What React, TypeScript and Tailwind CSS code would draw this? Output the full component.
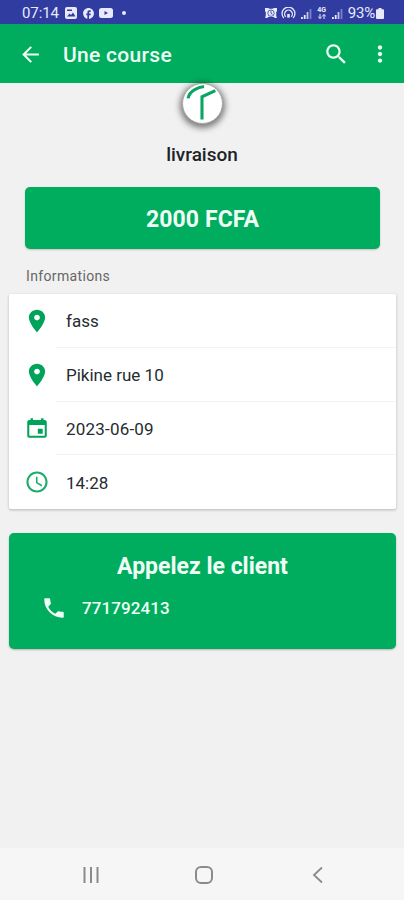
import React from "react";
import type { IconType } from "react-icons";
import {
  IoMdArrowBack,
  IoMdCalendar,
  IoMdCall,
  IoMdMore,
  IoMdPin,
  IoMdSearch,
  IoMdTime,
} from "react-icons/io";
import { MdFacebook } from "react-icons/md";

const infos: { icon: IconType; text: string }[] = [
  { icon: IoMdPin, text: "fass" },
  { icon: IoMdPin, text: "Pikine rue 10" },
  { icon: IoMdCalendar, text: "2023-06-09" },
  { icon: IoMdTime, text: "14:28" },
];

const Signal: React.FC = () => (
  <svg viewBox="0 0 11 11" className="w-[11px] h-[11px]" fill="currentColor">
    <path d="M0 9h1.8v2H0z" />
    <path d="M2.8 7h1.8v4H2.8z" />
    <path d="M5.6 4h1.8v7H5.6z" opacity=".8" />
    <path d="M8.6 1h1.8v10H8.6z" opacity=".4" />
  </svg>
);

const StatusBar: React.FC = () => (
  <div className="h-6 shrink-0 bg-[#303c9f] text-[#e8eafc] flex items-center justify-between pl-[22px] pr-[20px] pt-[2px]">
    <div className="flex items-center">
      <span className="text-[15px] leading-none w-[38px] tracking-[-0.1px]">
        07:14
      </span>
      <svg viewBox="0 0 12 12" className="w-[12px] h-[12px] ml-[5px]">
        <rect width="12" height="12" rx="2" fill="currentColor" />
        <path d="M2 9.500 4.500 6.500 6 8l2-2.500 2.500 4z" fill="#303c9f" />
        <path d="M2 2.500h5v1.500H2z" fill="#303c9f" />
      </svg>
      <MdFacebook className="w-[13px] h-[13px] ml-[5px]" />
      <svg viewBox="0 0 14 10" className="w-[14px] h-[10px] ml-[4px]">
        <rect width="14" height="10" rx="2.5" fill="currentColor" />
        <path d="M5.5 3v4L9 5z" fill="#303c9f" />
      </svg>
      <span className="w-1 h-1 rounded-full bg-current ml-[9px]" />
    </div>
    <div className="flex items-center">
      <svg viewBox="0 0 12 12" className="w-[12px] h-[12px]">
        <path
          d="M0 1h3l1.500.8h3L9 1h3v3l-.8 1.200v3l.6 2.800h-2l-1-1H3.200l-1 1h-2L.8 8.200v-3L0 4z"
          fill="currentColor"
        />
        <circle cx="6" cy="6.200" r="3.200" fill="none" stroke="#303c9f" strokeWidth=".8" />
        <path d="M6 4.200v2.200l1.400.8" fill="none" stroke="#303c9f" strokeWidth=".9" />
      </svg>
      <svg
        viewBox="0 0 16 13"
        className="w-[15px] h-[12px] ml-[4px] mr-[5px]"
        fill="none"
        stroke="currentColor"
        strokeWidth="1.400"
      >
        <path d="M3 12A7 7 0 1 1 13 12" />
        <path d="M5 10.500a4.200 4.200 0 1 1 6 0" />
        <path d="M8 7.500v4" strokeWidth="2.800" />
      </svg>
      <Signal />
      <span className="relative w-[10px] h-[12px] mx-[5px] text-[7px] leading-[7px] font-bold">
        <span className="block text-center">4G</span>
        <svg
          viewBox="0 0 10 5"
          className="absolute bottom-0 left-0 w-[10px] h-[5px]"
          fill="none"
          stroke="currentColor"
        >
          <path d="M3 0v4.500M1.200 2.800 3 4.500l1.800-1.700M7 5V.6M5.200 2.200 7 .6l1.800 1.600" />
        </svg>
      </span>
      <Signal />
      <span className="text-[15px] leading-none ml-[5px] tracking-[-0.2px]">
        93%
      </span>
      <svg viewBox="0 0 8 11" className="w-2 h-[11px] ml-px">
        <path
          d="M2.500 0h3v1.200H7a1 1 0 0 1 1 1V10a1 1 0 0 1-1 1H1a1 1 0 0 1-1-1V2.200a1 1 0 0 1 1-1h1.500z"
          fill="currentColor"
        />
      </svg>
    </div>
  </div>
);

const Header: React.FC = () => (
  <header className="h-[59px] shrink-0 bg-[#00ad5f] text-[#edfff4] flex items-center pl-[18px] pr-[10px]">
    <IoMdArrowBack className="w-[25px] h-[25px] mt-px" />
    <h1 className="ml-[20px] mt-[3px] flex-1 text-[21px] leading-none font-medium tracking-[0.3px]">
      Une course
    </h1>
    <IoMdSearch className="w-[26px] h-[26px]" />
    <IoMdMore className="w-[28px] h-[28px] ml-[17px] mt-px" />
  </header>
);

const Logo: React.FC = () => (
  <div className="w-[41px] h-[41px] rounded-full bg-white border border-[#a5a5a5] shadow-[0_2px_6px_2px_rgba(0,0,0,0.5)] overflow-hidden">
    <svg
      viewBox="0 0 38 38"
      className="w-full h-full"
      fill="none"
      stroke="#08a663"
      strokeWidth="3"
    >
      <path d="M5 14c.5-4 3-6.500 6.500-8.500C14 4 17 3 20.500 2.500" />
      <path d="M18.500 34.500V12.500L31.500 6.500" />
    </svg>
  </div>
);

const NavBar: React.FC = () => (
  <nav className="h-[52px] shrink-0 bg-[#f6f6f6] flex items-center justify-between pl-[82px] pr-[77px] pt-px text-[#8a8a8a]">
    <svg viewBox="0 0 18 18" className="w-[18px] h-[18px]" stroke="currentColor" strokeWidth="2">
      <path d="M2.500 1v16M9 1v16M15.500 1v16" />
    </svg>
    <span className="w-[18px] h-[18px] rounded-[6px] border-2 border-current mr-[2px]" />
    <svg viewBox="0 0 18 18" className="w-[18px] h-[18px]" fill="none" stroke="currentColor" strokeWidth="1.800">
      <path d="M13 1.500 5 9l8 7.500" />
    </svg>
  </nav>
);

const App: React.FC = () => {
  return (
    <div className="w-full h-screen flex flex-col bg-[#f1f1f1] font-[Roboto,sans-serif] overflow-hidden">
      <StatusBar />
      <Header />

      <main className="flex-1 flex flex-col">
        <div className="flex flex-col items-center">
          <Logo />
          <h2 className="mt-[19px] text-[19px] leading-6 font-medium text-[#1c2428]">
            livraison
          </h2>
        </div>

        <div className="mt-[20px] ml-[25px] mr-[24px] h-[62px] rounded-[5px] bg-[#00ad5f] shadow-[0_1px_2px_rgba(0,0,0,0.2)] flex items-center justify-center">
          <span className="text-[23px] font-bold text-[#f0fff6] mt-[4px] tracking-[0.1px]">
            2000 FCFA
          </span>
        </div>

        <p className="mt-[17px] ml-[26px] text-[14px] leading-5 tracking-[0.35px] text-[#666]">
          Informations
        </p>

        <ul className="mt-2 ml-[9px] mr-2 rounded-[2px] bg-white shadow-[0_1px_3px_rgba(0,0,0,0.25)]">
          {infos.map(({ icon: Icon, text }, i) => (
            <li key={i} className="h-[53.75px] pl-[15px] flex items-center">
              <Icon className="w-[26px] h-[26px] text-[#00a35a]" />
              <span
                className={`ml-[6px] pl-[10px] flex-1 h-full flex items-center text-[17px] text-[#262c30] pt-[3px] ${i === 2 ? "tracking-[0.2px]" : ""} ${i < infos.length - 1 ? "border-b border-[#f3f3f3]" : ""}`}
              >
                {text}
              </span>
            </li>
          ))}
        </ul>

        <section className="mt-6 ml-[9px] mr-2 h-[116px] rounded-[5px] bg-[#00ad5f] text-[#f0fff6] shadow-[0_1px_2px_rgba(0,0,0,0.25)]">
          <h3 className="pt-[20px] text-center text-[23px] leading-7 font-bold">
            Appelez le client
          </h3>
          <div className="mt-[13px] pl-8 flex items-center">
            <IoMdCall className="w-[26px] h-[26px]" />
            <span className="ml-[15px] mt-[2px] text-[17px] font-medium tracking-[0.1px]">
              771792413
            </span>
          </div>
        </section>
      </main>

      <NavBar />
    </div>
  );
};

export default App;
